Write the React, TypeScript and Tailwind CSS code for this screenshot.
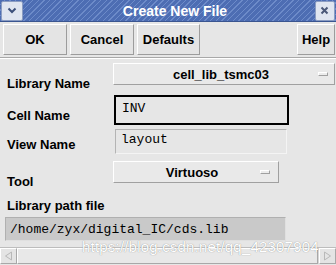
import React from "react";

const sans = "font-['Liberation_Sans',Arial,sans-serif]";
const mono = "font-['Liberation_Mono','Courier_New',monospace]";

function Btn({ label, w }: { label: string; w: string }) {
  return (
    <div
      className={`${w} h-[31px] flex items-center justify-center bg-[#e4e4e4] border border-t-white border-l-white border-b-[#9c9c9c] border-r-[#9c9c9c] text-[13px] font-bold text-black ${sans}`}
    >
      {label}
    </div>
  );
}

function Indicator() {
  return (
    <div className="w-[10px] h-[4px] bg-[#ececec] border border-t-white border-l-white border-b-[#a0a0a0] border-r-[#a0a0a0]" />
  );
}

export default function App() {
  return (
    <div className={`w-[336px] h-[265px] bg-[#e6e6e6] overflow-hidden relative ${sans}`}>
      {/* Title bar */}
      <div className="h-[22px] flex items-center justify-between px-[1px] bg-[#4f70b6] bg-[repeating-linear-gradient(135deg,#4d6db3_0px,#4d6db3_3px,#6d8bc9_3px,#6d8bc9_4px)] border-b border-[#3a5590]">
        <div className="w-[22px] h-[20px] flex items-center justify-center bg-[#dfe5f0] border border-[#8a9cc2] rounded-[2px]">
          <svg width="10" height="7" viewBox="0 0 10 7">
            <path d="M1.5 1.5 L5 5 L8.5 1.5" fill="none" stroke="#3b4f7a" strokeWidth="2" />
          </svg>
        </div>
        <div className="text-white font-bold text-[14px] leading-none pl-[12px]">Create New File</div>
        <div className="w-[20px] h-[20px] flex items-center justify-center bg-[#dfe5f0] border border-[#8a9cc2] rounded-[2px]">
          <svg width="9" height="9" viewBox="0 0 9 9">
            <path d="M1.5 1.5 L7.5 7.5 M7.5 1.5 L1.5 7.5" fill="none" stroke="#4a5878" strokeWidth="2" />
          </svg>
        </div>
      </div>

      {/* Button row */}
      <div className="flex pt-[2px] pl-[3px] pr-[1px] gap-[3px]">
        <Btn label="OK" w="w-[64px]" />
        <Btn label="Cancel" w="w-[64px]" />
        <Btn label="Defaults" w="w-[63px]" />
        <div className="flex-1" />
        <Btn label="Help" w="w-[38px]" />
      </div>
      <div className="mt-[2px] h-[2px] border-t border-[#a8a8a8] border-b border-b-white" />

      {/* Form */}
      <div className="flex flex-col text-[13px] font-bold text-black leading-[15px]">
        {/* Library Name */}
        <div className="h-[32px] flex items-start">
          <div className="w-[113px] pl-[7px] mt-[17px]">Library Name</div>
          <div className="mt-[4px] w-[222px] h-[22px] flex items-center bg-[#e9e9e9] border border-t-white border-l-white border-b-[#a0a0a0] border-r-[#a0a0a0]">
            <div className="flex-1 text-center pl-[10px]">cell_lib_tsmc03</div>
            <div className="mr-[6px]"><Indicator /></div>
          </div>
        </div>
        {/* Cell Name */}
        <div className="h-[36px] flex items-start">
          <div className="w-[114px] pl-[7px] mt-[17px]">Cell Name</div>
          <div className="mt-[4px] w-[175px] h-[30px] border-2 border-black bg-[#e6e6e6] flex items-center">
            <span className={`${mono} font-normal text-[13px] pl-[6px] -mt-[4px]`}>INV</span>
          </div>
        </div>
        {/* View Name */}
        <div className="h-[32px] flex items-start">
          <div className="w-[115px] pl-[7px] mt-[10px]">View Name</div>
          <div className="mt-[2px] w-[172px] h-[25px] border border-[#b4b4b4] border-b-[#f4f4f4] border-r-[#f4f4f4] bg-[#e6e6e6] flex items-center">
            <span className={`${mono} font-normal text-[13px] pl-[5px] -mt-[4px]`}>layout</span>
          </div>
        </div>
        {/* Tool */}
        <div className="h-[32px] flex items-start">
          <div className="w-[113px] pl-[7px] mt-[15px]">Tool</div>
          <div className="mt-[2px] w-[166px] h-[22px] flex items-center bg-[#e9e9e9] border border-t-white border-l-white border-b-[#a0a0a0] border-r-[#a0a0a0]">
            <div className="flex-1 text-center pl-[10px]">Virtuoso</div>
            <div className="mr-[8px]"><Indicator /></div>
          </div>
        </div>
        {/* Library path file */}
        <div className="pl-[7px] mt-[7px]">Library path file</div>
        <div className="mt-[4px] ml-[5px] w-[281px] h-[24px] bg-[#c9c9c9] border border-[#b0b0b0] border-b-[#e0e0e0] border-r-[#e0e0e0] flex items-center">
          <span className={`${mono} font-normal text-[13px] pl-[4px]`}>/home/zyx/digital_IC/cds.lib</span>
        </div>
      </div>

      {/* Scrollbar */}
      <div className="absolute left-0 right-0 top-[247px] h-[17px] flex bg-[#d6d6d6] border-t border-[#bdbdbd]">
        <div className="w-[17px] h-full flex items-center justify-center bg-[#e4e4e4] border border-t-white border-l-white border-b-[#a8a8a8] border-r-[#a8a8a8]">
          <svg width="9" height="10" viewBox="0 0 9 10">
            <path d="M7.5 1 L1.5 5 L7.5 9 Z" fill="none" stroke="#b8b8b8" strokeWidth="1" />
          </svg>
        </div>
        <div className="flex-1 h-full bg-[#e8e8e8] border border-t-white border-l-white border-b-[#a8a8a8] border-r-[#a8a8a8] mr-[1px]" />
        <div className="w-[17px] h-full flex items-center justify-center bg-[#e4e4e4] border border-t-white border-l-white border-b-[#a8a8a8] border-r-[#a8a8a8]">
          <svg width="9" height="10" viewBox="0 0 9 10">
            <path d="M1.5 1 L7.5 5 L1.5 9 Z" fill="none" stroke="#b8b8b8" strokeWidth="1" />
          </svg>
        </div>
      </div>

      {/* Watermark */}
      <div className="absolute left-[82px] top-[238px] text-[15px] leading-[18px] tracking-[0.2px] text-white font-normal [text-shadow:0_0_1px_rgba(110,110,110,0.9)] whitespace-nowrap">
        https://blog.csdn.net/qq_42307904
      </div>
    </div>
  );
}
